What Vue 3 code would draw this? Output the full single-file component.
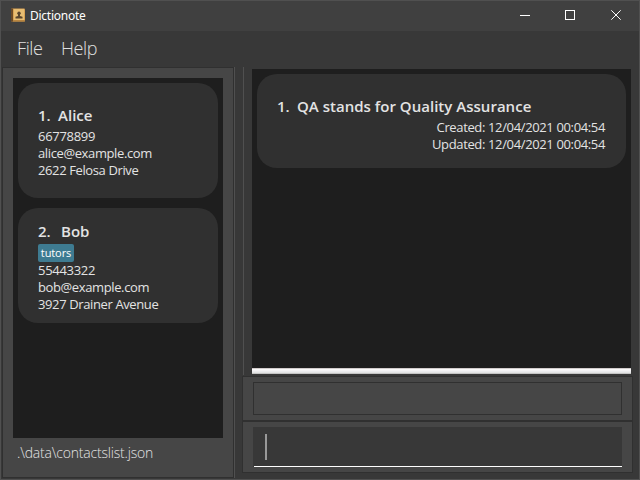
<script setup>
const contacts = [
  { id: 1, name: 'Alice', tags: [], phone: '66778899', email: 'alice@example.com', address: '2622 Felosa Drive' },
  { id: 2, name: 'Bob', tags: ['tutors'], phone: '55443322', email: 'bob@example.com', address: '3927 Drainer Avenue' }
]
const notes = [
  { id: 1, text: 'QA stands for Quality Assurance', created: '12/04/2021 00:04:54', updated: '12/04/2021 00:04:54' }
]
</script>

<template>
  <div class="window">
    <header class="titlebar">
      <svg class="app-icon" width="14" height="14" viewBox="0 0 14 14">
        <rect x="0" y="0.5" width="14" height="13" rx="1" fill="#d9a253" />
        <rect x="3" y="1" width="10" height="11" fill="#e8bd72" />
        <rect x="0" y="0.5" width="2" height="13" fill="#6b4925" />
        <rect x="2" y="12" width="12" height="1.5" fill="#b98640" />
        <circle cx="8" cy="5.300" r="1.7" fill="#59452d" />
        <path d="M7 6h2v2l2.500.800V10.500h-7V8.800L7 8z" fill="#59452d" />
      </svg>
      <span class="title">Dictionote</span>
      <svg class="controls" width="104" height="12" viewBox="0 0 104 12" fill="none" stroke="#fff">
        <path d="M0 6.500H10" />
        <rect x="45.500" y="1.500" width="9" height="9" />
        <path d="M91.300 1.300L100.700 10.700M100.700 1.300L91.300 10.700" />
      </svg>
    </header>
    <nav class="menu"><span class="file">File</span><span class="help">Help</span></nav>
    <main class="content">
      <section class="contacts">
        <div class="contact-list">
          <article v-for="c in contacts" :key="c.id" class="card contact" :class="{ tagged: c.tags.length }">
            <h2><span class="num">{{ c.id }}.</span><span>{{ c.name }}</span></h2>
            <div v-if="c.tags.length" class="tags"><span v-for="t in c.tags" :key="t" class="tag">{{ t }}</span></div>
            <p class="phone">{{ c.phone }}</p>
            <p>{{ c.email }}</p>
            <p class="address">{{ c.address }}</p>
          </article>
        </div>
        <footer>.\data\contactslist.json</footer>
      </section>
      <div class="divider"></div>
      <section class="workspace">
        <div class="note-area">
          <div class="note-list">
            <article v-for="n in notes" :key="n.id" class="card note">
              <h2><span class="num">{{ n.id }}.</span><span>{{ n.text }}</span></h2>
              <p>Created: {{ n.created }}</p>
              <p>Updated: {{ n.updated }}</p>
            </article>
          </div>
          <div class="scrollbar"></div>
        </div>
        <div class="panel result"><div class="result-box"></div></div>
        <div class="panel command"><div class="command-box"><i class="caret"></i></div></div>
      </section>
    </main>
  </div>
</template>

<style>
body { background: #383838; overflow: hidden; }
</style>
<style scoped>
* { box-sizing: border-box; }
h2, p { margin: 0; font-weight: 400; white-space: nowrap; }
.window { width: 640px; height: 480px; border: 1px solid #505050; background: #383838; color: #e3e3e3; font-family: "Open Sans", "Noto Sans", sans-serif; display: flex; flex-direction: column; }
.titlebar { height: 30px; background: #404040; display: flex; align-items: center; padding: 0 15px 2px 10px; color: #fff; font-size: 12px; }
.app-icon { margin-right: 5px; }
.title { padding-top: 1px; letter-spacing: -0.25px; font-family: "Noto Sans", sans-serif; }
.controls { margin-left: auto; }
.menu { height: 36px; padding: 0 0 2px 16px; display: flex; align-items: center; font-size: 18px; font-weight: 300; color: #e0e0e0; letter-spacing: -0.4px; }
.file { width: 44px; }
.content { height: 412px; padding-left: 1px; display: flex; }
.contacts { width: 232px; height: 411px; background: #464646; border: 1px solid #303030; padding: 10px 10px 0; }
.contact-list { height: 360px; background: #1e1e1e; padding: 5px; display: flex; flex-direction: column; gap: 10px; }
.card { background: #303030; border-radius: 20px; }
.contact { height: 115px; padding: 21px 20px 0; font-size: 13px; letter-spacing: -0.38px; }
.contact.tagged { padding-top: 12px; }
h2 { display: flex; font-size: 15px; line-height: 22px; font-weight: 600; letter-spacing: 0.02px; }
.num { width: 20px; }
.tagged .num { width: 23px; }
.contact p { line-height: 17px; }
.contact .phone { margin-top: 2px; letter-spacing: -0.3px; }
.contact.tagged .phone { margin-top: 0; }
.tags { height: 18px; display: flex; margin-top: 2px; }
.tag { width: 36px; height: 18px; border-radius: 2px; background: #3e7b91; color: #fff; font-size: 11px; line-height: 18px; text-align: center; letter-spacing: -0.1px; }
footer { padding: 5px 0 0 4px; font-size: 14px; line-height: 20px; font-weight: 300; white-space: nowrap; letter-spacing: -0.2px; }
.divider { width: 9px; height: 411px; border-left: 1px solid #505050; background: #383838; }
.workspace { width: 390px; }
.note-area { height: 308px; margin-bottom: 1px; padding: 2px 0 0 8px; border-left: 1px solid #505050; }
.note-list { width: 379px; height: 299px; padding: 5px; background: #1e1e1e; }
.scrollbar { width: 379px; height: 6px; background: linear-gradient(#d2cccc 0 1px, #fafafa 1px 2px, #f4f2f4 2px 3px, #ebebed 3px 4px, #e4e4e4 4px 5px, #c4c4c4 5px); }
.note { height: 94px; padding: 21px 21px 0 20px; font-size: 13px; letter-spacing: -0.36px; }
.note h2 { margin-bottom: 2px; }
.note p { text-align: right; line-height: 17px; }
.panel { width: 391px; margin-left: -1px; background: #464646; border: 1px solid #303030; padding: 5px 10px; }
.result { height: 45px; }
.result-box { width: 369px; height: 33px; border: 1px solid #303030; }
.command { height: 52px; }
.command-box { width: 369px; height: 40px; background: linear-gradient(#fff, #fff) 1px 100% / 100% 1px no-repeat #383838; padding: 7px 0 0 12px; }
.caret { display: block; width: 2px; height: 26px; background: #999; }
</style>
